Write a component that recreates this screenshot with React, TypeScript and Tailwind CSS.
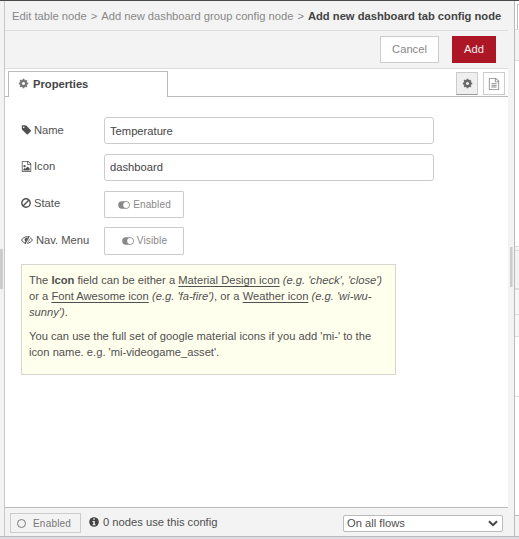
import React from "react";

const COG =
  "M1152 896q0-106-75-181t-181-75-181 75-75 181 75 181 181 75 181-75 75-181zm512-109v222q0 12-8 23t-20 13l-185 28q-19 54-39 91 35 50 107 138 10 12 10 25t-9 23q-27 37-99 108t-94 71q-12 0-26-9l-138-108q-44 23-91 38-16 136-29 186-7 28-36 28h-222q-14 0-24.5-8.5t-11.5-21.5l-28-184q-49-16-90-37l-141 107q-10 9-25 9-14 0-25-11-126-114-165-168-7-10-7-23 0-12 8-23 15-21 51-66.5t54-70.5q-27-50-41-99l-183-27q-13-2-21-12.5t-8-23.5v-222q0-12 8-23t19-13l186-28q14-46 39-92-40-57-107-138-10-12-10-24 0-10 9-23 26-36 98.5-107.5t94.5-71.5q13 0 26 10l138 107q44-23 91-38 16-136 29-186 7-28 36-28h222q14 0 24.5 8.5t11.5 21.5l28 184q49 16 90 37l142-107q9-9 24-9 13 0 25 10 129 119 165 170 7 8 7 22 0 12-8 23-15 21-51 66.5t-54 70.5q26 50 41 98l183 28q13 2 21 12.5t8 23.5z";
const TAG =
  "M576 448q0-53-37.5-90.5t-90.5-37.5-90.5 37.5-37.5 90.5 37.5 90.5 90.5 37.5 90.5-37.5 37.5-90.5zm1067 576q0 53-37 90l-491 492q-39 37-91 37-53 0-90-37l-715-716q-38-37-64.5-101t-26.5-117v-416q0-52 38-90t90-38h416q53 0 117 26.5t102 64.5l715 714q37 39 37 91z";
const FILE =
  "M1596 380q28 28 48 76t20 88v1152q0 40-28 68t-68 28h-1344q-40 0-68-28t-28-68v-1600q0-40 28-68t68-28h896q40 0 88 20t76 48zm-444-244v376h376q-10-29-22-41l-313-313q-12-12-41-22zm384 1528v-1024h-416q-40 0-68-28t-28-68v-416h-768v1536h1280z";
const LINES = "M512 768h768v128h-768zM512 1024h768v128h-768zM512 1280h768v128h-768z";
const PHOTO =
  "M1408 1216v320h-1024v-192l192-192 128 128 384-384zM576 1024q-80 0-136-56t-56-136 56-136 136-56 136 56 56 136-56 136-136 56z";

function Glyph({ d, className }: { d: string; className: string }) {
  return (
    <svg viewBox="0 0 1792 1792" fill="currentColor" className={`shrink-0 ${className}`}>
      <path d={d} />
    </svg>
  );
}

function Ban() {
  return (
    <svg viewBox="0 0 10 10" className="h-[10px] w-[10px] shrink-0" fill="none" stroke="currentColor" strokeWidth="1.4">
      <circle cx="5" cy="5" r="4.2" />
      <path d="M8 2 2 8" />
    </svg>
  );
}

function EyeSlash() {
  return (
    <svg viewBox="0 0 12 10" className="h-[10px] w-[12px] shrink-0" fill="none" stroke="currentColor">
      <path d="M4.6 8.1C2.7 7.6 1.2 6.3.6 5 1.7 3 3.7 1.8 6 1.8q.7 0 1.3.1M9 2.7C10.1 3.3 10.9 4.1 11.4 5 10.3 7 8.3 8.2 6 8.2" />
      <path d="M3.6 4.5Q4 3 5.5 2.7L6.5 3 4.8 6.8Q3.5 6 3.6 4.5Z" fill="currentColor" stroke="none" />
      <path d="M8.2 1 4 9" strokeWidth="1.2" />
      <path d="M8.4 4.2Q8.5 6 6.9 6.9" strokeWidth=".8" />
    </svg>
  );
}

function Toggle() {
  return (
    <svg viewBox="0 0 12 8" className="h-[8px] w-[12px] shrink-0">
      <rect x=".2" y=".3" width="11.6" height="7.4" rx="3.7" fill="#888" />
      <circle cx="8.1" cy="4" r="2.9" fill="#fff" />
    </svg>
  );
}

function Info() {
  return (
    <svg viewBox="0 0 10 10" className="h-[10px] w-[10px] shrink-0">
      <circle cx="5" cy="5" r="4.8" fill="#444" />
      <path d="M4.2 1.5h1.6v1.3H4.2zM3.5 4h2.3v3.2h.7v1h-3v-1h.8V5h-.8z" fill="#f3f3f3" />
    </svg>
  );
}

function Row({ icon, label, labelClass, children }: { icon: React.ReactNode; label: string; labelClass: string; children: React.ReactNode }) {
  return (
    <div className="flex">
      <div className={`flex w-[83px] shrink-0 items-center whitespace-nowrap ${labelClass}`}>
        {icon}
        <span>{label}</span>
      </div>
      {children}
    </div>
  );
}

const inputClass =
  "h-[27px] w-[330px] rounded-[3px] border border-[#ccc] bg-white px-[5px] text-[11.2px] text-[#444] outline-none";
const toggleClass =
  "flex w-[80px] items-center justify-center gap-[3px] rounded-[1px] border border-[#ccc] bg-white pl-px text-[10px] tracking-[0.15px] text-[#888]";

export default function App() {
  return (
    <div className="flex h-[539px] w-[519px] flex-col overflow-hidden bg-[#dddbe3] font-['Liberation_Sans',Arial,sans-serif] text-[11.2px] leading-[16px] text-[#505050]">
      <div className="h-px shrink-0 bg-[#4c484c]" />
      <div className="flex h-[536px] shrink-0 border-b border-[#bbb]">
        <div className="flex w-[5px] shrink-0 flex-col border-r border-[#c8c8c8] bg-[#f3f3f3] pt-[248px]">
          <div className="h-10 w-[3px] bg-[#ccc]" />
        </div>
        <main className="flex w-[503px] shrink-0 flex-col bg-white">
          <nav className="flex h-[30px] shrink-0 items-center gap-[4px] whitespace-nowrap border-b border-[#ddd] bg-[#f3f3f3] pl-[7px] text-[#888]">
            <span>Edit table node</span>
            <span>&gt;</span>
            <span>Add new dashboard group config node</span>
            <span>&gt;</span>
            <strong className="text-[#444]">Add new dashboard tab config node</strong>
          </nav>
          <div className="flex h-[38px] shrink-0 items-start justify-end gap-[13px] border-b border-[#ddd] bg-[#f3f3f3] pr-[12px] pt-[5px]">
            <button className="h-[27px] w-[59px] border border-[#ccc] bg-white pb-px text-[#888]">Cancel</button>
            <button className="h-[27px] w-[44px] bg-[#ad1625] pb-px text-[#eee]">Add</button>
          </div>
          <div className="flex h-[28px] shrink-0 pt-[2px]">
            <div className="w-[3px] border-b border-[#bbb]" />
            <div className="flex w-[160px] items-center gap-[4px] border border-b-0 border-[#bbb] pb-[2px] pl-[9px] font-bold text-[#444]">
              <Glyph d={COG} className="h-[11px] w-[11px] text-[#777]" />
              Properties
            </div>
            <div className="flex flex-1 items-start justify-end gap-[5px] border-b border-[#bbb] pr-[3px] pt-px">
              <button className="flex h-[23px] w-[22px] items-center justify-center border border-[#ccc] border-b-[#999] bg-[#efefef] text-[#666]">
                <Glyph d={COG} className="h-[11px] w-[11px]" />
              </button>
              <button className="flex h-[23px] w-[22px] items-center justify-center border border-[#ccc] bg-white text-[#888]">
                <Glyph d={FILE + LINES} className="h-[12px] w-[12px]" />
              </button>
            </div>
          </div>
          <section className="flex flex-1 flex-col pl-[16px] pt-[20px]">
            <div className="flex h-[37px]">
              <Row icon={<Glyph d={TAG} className="h-[12px] w-[11px]" />} label="Name" labelClass="h-[26px] gap-[2px]">
                <input className={inputClass} defaultValue="Temperature" />
              </Row>
            </div>
            <div className="flex h-[37px]">
              <Row icon={<Glyph d={FILE + PHOTO} className="h-[11px] w-[11px]" />} label="Icon" labelClass="h-[24px] gap-[2px]">
                <input className={`pb-[2px] ${inputClass}`} defaultValue="dashboard" />
              </Row>
            </div>
            <div className="flex h-[36px]">
              <Row icon={<Ban />} label="State" labelClass="h-[24px] gap-[3px]">
                <button className={`h-[27px] ${toggleClass}`}>
                  <Toggle />
                  Enabled
                </button>
              </Row>
            </div>
            <div className="flex h-[37px]">
              <Row icon={<EyeSlash />} label="Nav. Menu" labelClass="h-[26px] gap-[3px]">
                <button className={`h-[28px] ${toggleClass}`}>
                  <Toggle />
                  Visible
                </button>
              </Row>
            </div>
            <div className="h-[111px] w-[375px] whitespace-nowrap border border-[#d6d6d0] bg-[#ffffee] pl-[7px] pt-[7px]">
              <p>
                The <b>Icon</b> field can be either a <u className="underline-offset-2">Material Design icon</u> <i>(e.g. 'check', 'close')</i>
                <br />
                or a <u className="underline-offset-2">Font Awesome icon</u> <i>(e.g. 'fa-fire')</i>, or a <u className="underline-offset-2">Weather icon</u> <i>(e.g. 'wi-wu-</i>
                <br />
                <i>sunny')</i>.
              </p>
              <p className="mt-2">
                You can use the full set of google material icons if you add 'mi-' to the
                <br />
                icon name. e.g. 'mi-videogame_asset'.
              </p>
            </div>
          </section>
          <footer className="flex h-[29px] shrink-0 items-start border-t border-[#bbb] bg-[#f3f3f3] pl-[5px] pt-[5px]">
            <button className="flex h-[20px] w-[71px] items-center gap-[7px] border border-[#ccc] pl-[6px] pt-px text-[10px] tracking-[0.2px] text-[#777]">
              <span className="h-[9px] w-[9px] rounded-full border border-[#777]" />
              Enabled
            </button>
            <div className="ml-[8px] flex h-[18px] items-center gap-[4px]">
              <Info />
              0 nodes use this config
            </div>
            <button className="ml-auto mr-[5px] mt-[2px] flex h-[17px] w-[160px] items-center justify-between rounded-[2px] border border-[#bbb] bg-white pb-px pl-[3px] pr-[4px]">
              On all flows
              <svg viewBox="0 0 10 7" className="h-[7px] w-[10px]" fill="none" stroke="#444" strokeWidth="2">
                <path d="m1 1.2 4 4 4-4" />
              </svg>
            </button>
          </footer>
        </main>
        <div className="flex w-[6px] shrink-0 justify-center bg-[#f3f3f3] pt-[246px]">
          <div className="h-10 w-[3px] border-r border-[#ddd] bg-[#ccc]" />
        </div>
        <aside className="flex w-[5px] shrink-0 flex-col border-l border-[#bbb] bg-white">
          <div className="ml-[2px] mt-[3px] h-[25px] border-l border-t border-[#bbb]" />
          <div className="h-[32px] border-b border-t border-[#ddd] bg-[#f3f3f3]" />
          <div className="h-[185px]" />
          <div className="h-[5px] border-b border-t border-[#ddd] bg-[#f3f3f3]" />
          <div className="h-[39px] border-b-2 border-[#ddd] bg-[#f3f3f3]" />
          <div className="h-[25px] border-b border-[#ddd] bg-[#f7f7f7]" />
          <div className="h-[22px] border-b border-[#ddd] bg-[#f7f7f7]" />
          <div className="h-[60px] border-b border-[#ddd]" />
          <div className="h-[118px]" />
          <div className="flex-1 border-t border-[#bbb] bg-[#f3f3f3]" />
        </aside>
      </div>
    </div>
  );
}
